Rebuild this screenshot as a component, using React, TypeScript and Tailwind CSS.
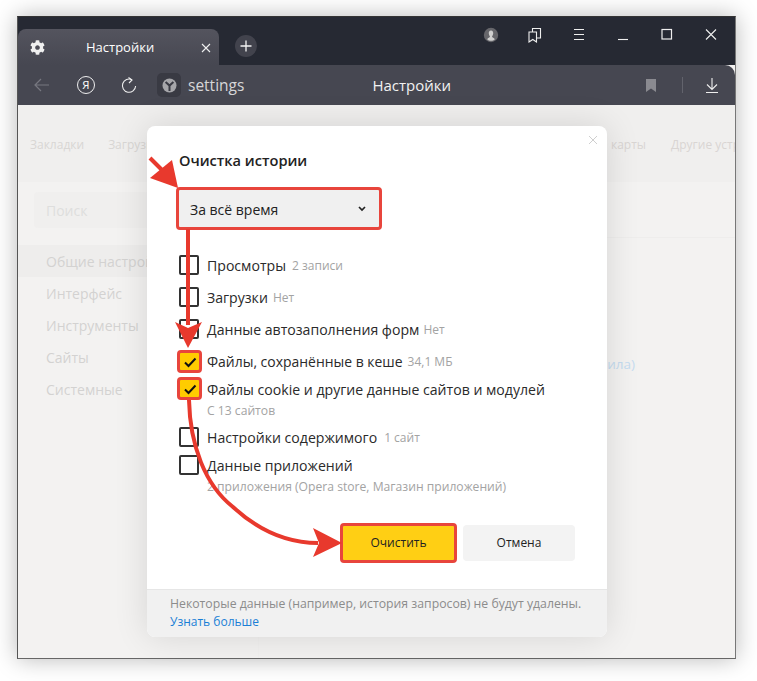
import { FaCog } from "react-icons/fa";

const font = { fontFamily: '"Open Sans", "Noto Sans", sans-serif' };

function Box({ checked }: { checked?: boolean }) {
  if (checked) {
    return (
      <span className="flex h-[23px] w-[25px] shrink-0 items-center justify-center rounded-[4px] border-[3px] border-[#e8453c] bg-[#ffcc00]">
        <svg width="14" height="12" viewBox="0 0 14 12" fill="none">
          <path d="M2 6.5 L5.5 10 L12.5 2.5" stroke="#111" strokeWidth="2" />
        </svg>
      </span>
    );
  }
  return <span className="ml-[2px] mr-[3px] block h-[20px] w-[20px] shrink-0 rounded-[2px] border-2 border-[#333]" />;
}

function Row({ label, note, noteMl, sub, checked, h, top, size }: { label: string; note?: string; noteMl?: string; sub?: string; checked?: boolean; h: string; top?: string; size?: string }) {
  return (
    <div className={`flex items-start gap-[5px] ${h}`}>
      <Box checked={checked} />
      <div className={top}>
        <div className={`flex h-[22px] items-center whitespace-nowrap ${size ?? "text-[14.1px]"} leading-[22px] text-[#2a2a2a]`}>
          {label}
          {note && <span className={`${noteMl ?? "ml-[6px]"} text-[12px] text-[#a3a3a3]`}>{note}</span>}
        </div>
        {sub && <div className="mt-[1px] whitespace-nowrap text-[12.15px] leading-[18px] text-[#a3a3a3]">{sub}</div>}
      </div>
    </div>
  );
}

function Side({ t, active }: { t: string; active?: boolean }) {
  return (
    <div className={`flex h-[32px] items-center pl-[28px] text-[14px] text-[#d3d2d1] ${active ? "bg-[#eeedec]" : ""}`}>{t}</div>
  );
}

export default function App() {
  return (
    <div className="h-[681px] w-[757px] overflow-hidden bg-white pl-[17px] pt-[16px]" style={font}>
      <div className="relative flex h-[643px] w-[719px] flex-col border border-l-[#555] border-r-[#777] border-b-[#666] border-t-[#333] bg-[#f3f2f1] shadow-[0_0_22px_rgba(0,0,0,0.28)]">
        {/* Title strip */}
        <div className="flex h-[48px] shrink-0 bg-[#262933]">
          <div className="mt-[12px] flex h-[36px] w-[201px] items-center rounded-t-[8px] bg-gradient-to-b from-[#54545e] to-[#464751] pl-[12px] pt-[1px] text-white">
            <FaCog className="text-[15px] text-[#f0f0f0]" />
            <span className="ml-[41px] text-[13px]">Настройки</span>
            <svg className="ml-[47px]" width="10" height="10" viewBox="0 0 10 10" stroke="#f0f0f0" strokeWidth="1.1">
              <path d="M1 1 L9 9 M9 1 L1 9" />
            </svg>
          </div>
          <div className="ml-[16px] mt-[18px] flex h-[22px] w-[22px] items-center justify-center rounded-full bg-[#42434d]">
            <svg width="12" height="12" viewBox="0 0 12 12" stroke="#f4f4f4" strokeWidth="1.3">
              <path d="M6 0.5 V11.5 M0.5 6 H11.5" />
            </svg>
          </div>
          <div className="ml-auto mt-[10px] flex h-[20px] items-start gap-[28px] pr-[16px]">
            <svg width="16" height="16" viewBox="0 0 16 16">
              <circle cx="8" cy="8" r="7.2" fill="#66666b" />
              <path d="M8 3.5 C6.3 3.5 5.6 5 5.8 6.6 C6 8.2 6.7 9 7 9.6 C6.8 10.8 5 11 4.2 12.2 C6 14.2 10 14.2 11.8 12.2 C11 11 9.2 10.8 9 9.6 C9.3 9 10 8.2 10.2 6.6 C10.4 5 9.7 3.5 8 3.5 Z" fill="#d0d0d0" />
            </svg>
            <svg width="16" height="16" viewBox="0 0 14 16" fill="none" stroke="#eee" strokeWidth="1.1">
              <path d="M1 5 H8.5 V15 L4.8 12.5 L1 15 Z" />
              <path d="M4.5 5 V1.5 H12.5 V11 L8.5 11" />
            </svg>
            <svg width="16" height="16" viewBox="0 0 16 16" stroke="#eee" strokeWidth="1.1">
              <path d="M3 2.5 H13 M3 7.5 H13 M3 12.5 H13" />
            </svg>
            <svg width="16" height="16" viewBox="0 0 16 16" stroke="#eee" strokeWidth="1.1">
              <path d="M3 12.5 H13" />
            </svg>
            <svg width="16" height="16" viewBox="0 0 16 16" fill="none" stroke="#eee" strokeWidth="1.2">
              <rect x="3" y="2.5" width="9.5" height="9.5" />
            </svg>
            <svg width="16" height="16" viewBox="0 0 16 16" stroke="#eee" strokeWidth="1.1">
              <path d="M3 2.5 L13 12.5 M13 2.5 L3 12.5" />
            </svg>
          </div>
        </div>

        {/* Toolbar */}
        <div className="relative flex h-[40px] shrink-0 items-center rounded-tr-[10px] bg-[#464751] pl-[16px] text-white">
          <svg width="16" height="14" viewBox="0 0 16 14" fill="none" stroke="#777880" strokeWidth="1.2">
            <path d="M15 7 H1 M7 1 L1 7 L7 13" />
          </svg>
          <span className="ml-[27px] flex h-[18px] w-[18px] items-center justify-center rounded-full border border-[#eee] text-[11.5px] leading-none">Я</span>
          <svg className="ml-[26px]" width="16" height="17" viewBox="0 0 16 17" fill="none" stroke="#eee" strokeWidth="1.1">
            <path d="M11 2.8 A6.6 6.6 0 1 0 14.6 9" />
            <path d="M7.5 0.5 L11 3 L8 6" />
          </svg>
          <span className="ml-[20px] flex h-[24px] w-[24px] items-center justify-center rounded-[5px] bg-[#393a43]">
            <svg width="15" height="15" viewBox="0 0 15 15">
              <circle cx="7.5" cy="7.5" r="7" fill="#a6a6aa" />
              <path d="M3.6 4 L7.5 7.6 L11.4 4 M7.5 7.6 V13" stroke="#393a43" strokeWidth="2" fill="none" />
            </svg>
          </span>
          <span className="ml-[7px] pt-[1px] text-[15.5px] text-[#d6d6d8]">settings</span>
          <span className="ml-[41px] flex-1 text-[15px] font-medium text-[#f2f2f2]">
            <span className="ml-[87px]">Настройки</span>
          </span>
          <svg width="10" height="13" viewBox="0 0 10 13" fill="#8a8a90">
            <path d="M0 0 H10 V13 L5 9.5 L0 13 Z" />
          </svg>
          <span className="ml-[26px] h-[16px] w-px bg-[#62636c]" />
          <svg className="ml-[22px] mr-[16px]" width="14" height="15" viewBox="0 0 14 15" fill="none" stroke="#eee" strokeWidth="1.1">
            <path d="M7 0 V11 M2 6.5 L7 11.5 L12 6.5 M1 14.5 H13" />
          </svg>
        </div>

        {/* Blurred settings page behind */}
        <div className="flex min-h-0 flex-1 flex-col overflow-hidden bg-[#f3f2f1]">
          <div className="flex h-[77px] shrink-0 items-center overflow-hidden whitespace-nowrap bg-[#f0efee] pl-[12px] pt-[2px] text-[12px] text-[#d8d6d4]">
            <span>Закладки</span>
            <span className="ml-[24px]">Загрузки</span>
            <span className="ml-[451px] text-[#d9d5d3]">карты</span>
            <span className="ml-[25px] text-[#d9d5d3]">Другие устройства</span>
          </div>
          <div className="flex flex-1">
            <div className="w-[240px]">
              <div className="ml-[16px] mt-[10px] flex h-[36px] w-[115px] items-center rounded-[4px] bg-[#f0efee] pl-[12px] text-[14px] text-[#dededd]">Поиск</div>
              <div className="mt-[17px]">
                <Side t="Общие настройки" active />
                <Side t="Интерфейс" />
                <Side t="Инструменты" />
                <Side t="Сайты" />
                <Side t="Системные" />
              </div>
            </div>
            <div className="flex-1 border-l border-[#f1f0ef]">
              <div className="mt-[55px] border-t border-[#eeedec]" />
              <div className="mt-[116px] pr-[100px] text-right text-[13.5px] text-[#c5dcf0]">ила)</div>
            </div>
          </div>
        </div>

        {/* Modal */}
        <div className="absolute left-[129px] top-[109px] flex h-[511px] w-[460px] flex-col rounded-[8px] bg-white shadow-[0_0_34px_rgba(0,0,0,0.12)]">
          <svg className="absolute right-[9px] top-[9px]" width="10" height="10" viewBox="0 0 10 10" stroke="#cfcfcf" strokeWidth="1">
            <path d="M1 1 L9 9 M9 1 L1 9" />
          </svg>
          <div className="flex-1 pl-[32px]">
            <div className="mt-[23px] text-[14.6px] font-semibold leading-[22px] text-[#222]">Очистка истории</div>
            <div className="-ml-[3px] mt-[16px] flex h-[43px] w-[206px] items-center justify-between rounded-[4px] border-[3px] border-[#e8453c] bg-[#f0f0f0] pl-[11px] pr-[13px] pt-[1px] text-[14px] text-[#222]">
              За всё время
              <svg width="8" height="6" viewBox="0 0 8 6" fill="none" stroke="#222" strokeWidth="1.7">
                <path d="M1 1 L4 4 L7 1" />
              </svg>
            </div>
            <div className="-ml-[2px] mt-[25px] flex flex-col">
              <Row h="h-[32px]" label="Просмотры" note="2 записи" />
              <Row h="h-[32px]" label="Загрузки" note="Нет" noteMl="ml-[5px]" />
              <Row h="h-[31px]" label="Данные автозаполнения форм" note="Нет" noteMl="ml-[4px]" />
              <Row h="h-[27px]" top="mt-[1px]" size="text-[13.95px]" label="Файлы, сохранённые в кеше" note="34,1 МБ" noteMl="ml-[5px]" checked />
              <Row h="h-[50px]" top="mt-[2px]" label="Файлы cookie и другие данные сайтов и модулей" sub="С 13 сайтов" checked />
              <Row h="h-[28px]" label="Настройки содержимого" note="1 сайт" noteMl="ml-[7px]" />
              <Row h="h-[68px]" label="Данные приложений" sub="2 приложения (Opera store, Магазин приложений)" />
            </div>
            <div className="flex items-center pl-[161px]">
              <div className="flex h-[40px] w-[117px] items-center justify-center rounded-[4px] border-[3px] border-[#e8453c] bg-[#ffcf14] text-[12px] text-[#222]">Очистить</div>
              <div className="ml-[6px] flex h-[36px] w-[112px] items-center justify-center rounded-[4px] bg-[#f3f3f3] text-[12px] text-[#222]">Отмена</div>
            </div>
          </div>
          <div className="h-[48px] shrink-0 rounded-b-[8px] border-t border-[#e6e6e6] bg-[#f1f1f1] pl-[23px] pt-[5px] text-[12px] leading-[18px]">
            <div className="whitespace-nowrap text-[12.25px] text-[#8c8c8c]">Некоторые данные (например, история запросов) не будут удалены.</div>
            <div className="text-[#1a7fd6]">Узнать больше</div>
          </div>
        </div>

        {/* Annotation arrows */}
        <svg className="pointer-events-none absolute left-[-18px] top-[-17px]" width="757" height="681" viewBox="0 0 757 681" fill="none">
          <path d="M150 158 L167 175" stroke="#e8392d" strokeWidth="4" />
          <path d="M178 188 L172 160 L150 178 Z" fill="#e8392d" />
          <path d="M188 229 V325" stroke="#e8392d" strokeWidth="4" />
          <path d="M188 348 L175 322 L188 328 L202 322 Z" fill="#e8392d" />
          <path d="M189 400 C190 445 205 485 233 507 C258 530 285 543 318 543" stroke="#e8392d" strokeWidth="4" />
          <path d="M342 543 L313 528 L319 543 L313 557 Z" fill="#e8392d" />
        </svg>
      </div>
    </div>
  );
}
